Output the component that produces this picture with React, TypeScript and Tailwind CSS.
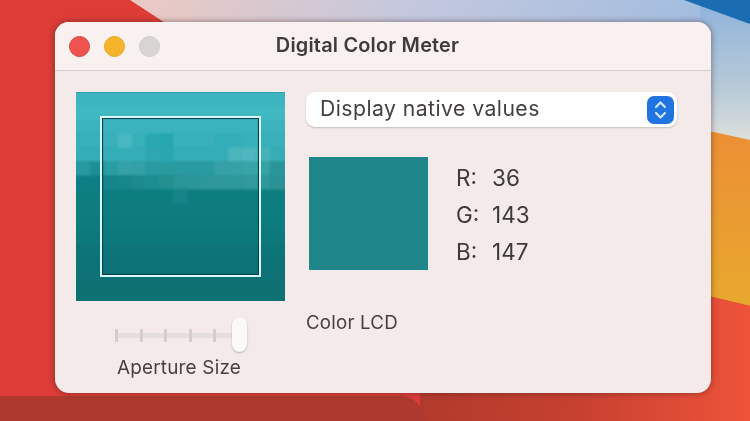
import React from "react";

const CELL = 13.85;

const rows = [
  "#3cb5c0", "#3fb9c3", "#3ab3bd", "#38b0ba", "#36adb7", "#2c9aa1", "#0f7f84", "#0e7e80",
  "#0e7d80", "#0d7b7e", "#0c797c", "#0a7477", "#0a7275", "#0b7174", "#0a6f71", "#0a6f71",
];

// blocks that stand out from their row: [col, row, colour]
const patches: [number, number, string][] = [
  [3, 3, "#4ab8c1"], [5, 3, "#2aa8b0"], [6, 3, "#28a6ae"], [10, 3, "#33aeb8"], [11, 3, "#35aeb7"],
  [5, 4, "#2ea7b0"], [6, 4, "#2ca6ae"], [11, 4, "#4bb5bd"], [12, 4, "#50b7bf"], [13, 4, "#46b2ba"],
  [0, 5, "#279aa0"], [1, 5, "#1d8f94"], [2, 5, "#2a9da3"], [3, 5, "#35a2a8"], [4, 5, "#33a0a6"],
  [10, 5, "#35a1a6"], [11, 5, "#36a2a7"], [12, 5, "#38a4a8"], [13, 5, "#35a2a6"],
  [2, 6, "#15858a"], [3, 6, "#17878b"], [4, 6, "#1a8a8e"], [5, 6, "#1f8e92"], [6, 6, "#22908f"],
  [7, 6, "#2a9598"], [8, 6, "#2c9699"], [9, 6, "#2d979a"], [10, 6, "#2e989b"], [11, 6, "#2f999c"],
  [12, 6, "#30999c"], [13, 6, "#2f989b"], [14, 6, "#2b9296"], [15, 6, "#2b9296"], [14, 5, "#2c9599"],
  [7, 7, "#148488"],
];

function PixelPreview() {
  return (
    <svg width="209" height="209" viewBox="0 0 209 209" className="block">
      <defs>
        <filter id="soften">
          <feGaussianBlur stdDeviation="1" />
        </filter>
      </defs>
      <g filter="url(#soften)">
        <rect x="-4" y="-4" width="217" height="217" fill="#0a6f71" />
        {rows.map((c, i) => (
          <rect key={i} x="-4" y={i * CELL} width="217" height="14.2" fill={c} />
        ))}
        {patches.map(([x, y, c], i) => (
          <rect key={i} x={x * CELL} y={y * CELL} width="14.2" height="14.2" fill={c} />
        ))}
      </g>
      <rect x="26.5" y="26.5" width="156" height="156" fill="none" stroke="#0a4450" strokeWidth="1.2" />
      <rect x="25" y="25" width="159" height="159" fill="none" stroke="#d8f7fa" strokeWidth="2" />
    </svg>
  );
}

function ApertureSlider() {
  return (
    <div className="relative w-[132px] h-[36px] flex items-center">
      <div className="flex items-center justify-between w-[126px] h-[5px] bg-[#e4dedd] rounded-sm">
        {[0, 1, 2, 3, 4, 5].map((i) => (
          <span key={i} className="w-[3px] h-[13px] bg-[#d3cdcc]" />
        ))}
      </div>
      <div className="absolute right-0 top-0 w-[15px] h-[35px] bg-[#fbf8f8] rounded-full shadow-[0_1px_2px_rgba(0,0,0,0.25)]" />
    </div>
  );
}

function Wallpaper() {
  return (
    <svg className="absolute inset-0" width="750" height="421" viewBox="0 0 750 421">
      <defs>
        <linearGradient id="sky" x1="0" y1="0" x2="1" y2="0">
          <stop offset="0" stopColor="#ecc9c2" />
          <stop offset="0.45" stopColor="#c4c8de" />
          <stop offset="1" stopColor="#9dbce0" />
        </linearGradient>
        <linearGradient id="skyRight" x1="0" y1="0" x2="0" y2="1">
          <stop offset="0" stopColor="#8fb3dc" />
          <stop offset="0.6" stopColor="#b5c9d8" />
          <stop offset="1" stopColor="#dfe0dc" />
        </linearGradient>
        <linearGradient id="amber" x1="0" y1="0" x2="0" y2="1">
          <stop offset="0" stopColor="#ec8f35" />
          <stop offset="1" stopColor="#e8a82e" />
        </linearGradient>
        <linearGradient id="ember" x1="0" y1="0" x2="1" y2="0">
          <stop offset="0" stopColor="#b23a2c" />
          <stop offset="0.45" stopColor="#c5402f" />
          <stop offset="1" stopColor="#ee533a" />
        </linearGradient>
      </defs>
      <rect width="750" height="421" fill="#dd3c37" />
      <polygon points="130,0 750,0 750,30 176,30" fill="url(#sky)" />
      <polygon points="700,0 750,0 750,142 700,132" fill="url(#skyRight)" />
      <polygon points="684,0 750,0 750,24" fill="#1b6cb0" />
      <polygon points="700,129 750,140 750,306 700,294" fill="url(#amber)" />
      <polygon points="420,421 420,385 700,385 700,294 750,306 750,421" fill="url(#ember)" />
      <path d="M0 396 H400 Q420 396 426 421 H0 Z" fill="#ae3a2f" />
    </svg>
  );
}

export default function App() {
  return (
    <div className="relative w-[750px] h-[421px] overflow-hidden pl-[55px] pt-[22px] font-['Inter',sans-serif] blur-[0.4px]">
      <Wallpaper />
      <div className="relative w-[656px] h-[371px] flex flex-col rounded-[14px] overflow-hidden bg-[#f4eae9] shadow-[0_0_6px_rgba(60,30,30,0.55)]">
        <div className="relative h-[49px] shrink-0 flex items-center justify-center pr-[31px] bg-[#f9f1f0] border-b border-[#d6cfce]">
          <div className="absolute left-[14px] top-[14px] flex gap-[14px]">
            <span className="w-[21px] h-[21px] rounded-full bg-[#ee5350] border border-[#d9443f]" />
            <span className="w-[21px] h-[21px] rounded-full bg-[#f6b42c] border border-[#e5a623]" />
            <span className="w-[21px] h-[21px] rounded-full bg-[#d9d5d4] border border-[#cfcbca]" />
          </div>
          <span className="text-[19.9px] font-semibold text-[#3f3b3b] tracking-[0.2px]">Digital Color Meter</span>
        </div>

        <div className="flex flex-1 pl-[21px] pt-[21px]">
          <div className="w-[209px] flex flex-col items-center">
            <PixelPreview />
            <div className="mt-[16px] ml-[1px]">
              <ApertureSlider />
            </div>
            <span className="mt-[1px] ml-[-3px] text-[18.9px] text-[#454141] tracking-[0.2px]">Aperture Size</span>
          </div>

          <div className="ml-[21px] flex flex-col">
            <div className="w-[371px] h-[35px] flex items-center justify-between pl-[14px] pr-[3px] bg-white rounded-[9px] shadow-[0_1px_2px_rgba(0,0,0,0.2)]">
              <span className="mt-[-2px] text-[21.2px] text-[#444040] tracking-[0.45px]">Display native values</span>
              <div className="w-[27px] h-[28px] rounded-[7px] bg-[#1f74e0] flex items-center justify-center">
                <svg width="15" height="22" viewBox="0 0 15 22" fill="none" stroke="#cfe6fb" strokeWidth="2.2" strokeLinecap="round" strokeLinejoin="round">
                  <path d="M3 8 L7.5 3.5 L12 8" />
                  <path d="M3 14 L7.5 18.5 L12 14" />
                </svg>
              </div>
            </div>

            <div className="flex mt-[30px] ml-[3px]">
              <div className="w-[119px] h-[113px] bg-[#1f868a]" />
              <div className="ml-[28px] mt-[6px] flex flex-col gap-[8px] text-[22.5px] leading-[29px] text-[#3d3a3a]">
                <div className="flex"><span className="w-[36px]">R:</span><span>36</span></div>
                <div className="flex"><span className="w-[36px]">G:</span><span>143</span></div>
                <div className="flex"><span className="w-[36px]">B:</span><span>147</span></div>
              </div>
            </div>

            <span className="mt-[39px] text-[18.7px] text-[#454141] tracking-[0.2px]">Color LCD</span>
          </div>
        </div>
      </div>
    </div>
  );
}
